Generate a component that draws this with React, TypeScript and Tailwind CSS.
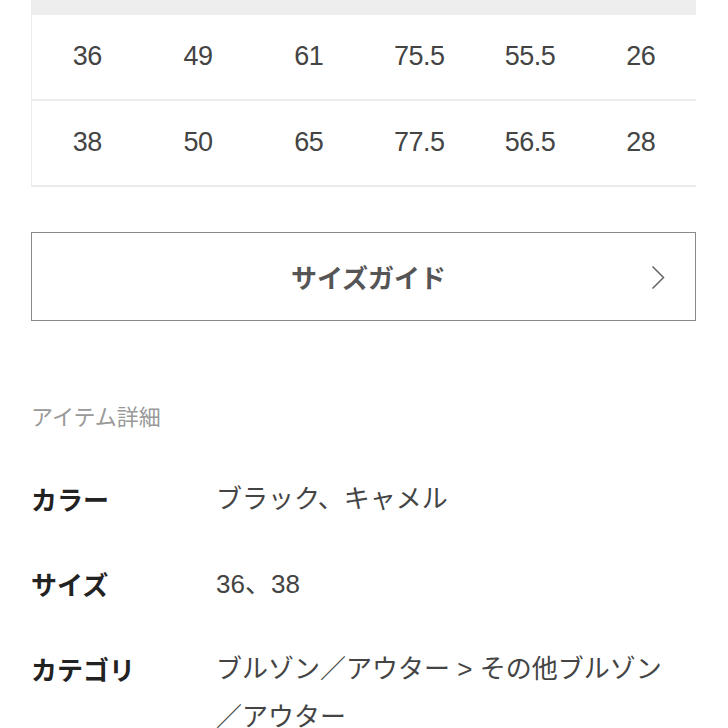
import type { ReactNode } from 'react';

const rows = [
  ['36', '49', '61', '75.5', '55.5', '26'],
  ['38', '50', '65', '77.5', '56.5', '28'],
];

const details: { label: string; value: ReactNode }[] = [
  { label: 'カラー', value: 'ブラック、キャメル' },
  { label: 'サイズ', value: '36、38' },
  {
    label: 'カテゴリ',
    value: (
      <>
        ブルゾン／アウター &gt; その他ブルゾン
        <br />
        ／アウター
      </>
    ),
  },
];

export default function App() {
  return (
    <div
      className="w-[728px] h-[728px] overflow-hidden bg-white text-[#333]"
      style={{ fontFamily: '"Liberation Sans", "Noto Sans CJK JP", sans-serif' }}
    >
      <div className="pl-[31px] pr-[32px]">
        {/* size table (scrolled, header cut off) */}
        <div className="border-l border-[#ececec]">
          <div className="h-[15px] bg-[#eeeeee]" />
          {rows.map((r, i) => (
            <div key={i} className="grid grid-cols-6 h-[86px] border-b-2 border-[#ebebeb] items-center">
              {r.map((v, j) => (
                <div key={j} className="text-center text-[27px] tracking-[-0.5px] text-[#444] pb-[1px]">
                  {v}
                </div>
              ))}
            </div>
          ))}
        </div>

        <div className="mt-[45px] h-[89px] border-[1.5px] border-[#8a8a8a] flex items-center justify-center relative">
          <span className="text-[26px] font-bold text-[#555] pl-[10px]" style={{ fontFamily: '"Noto Sans CJK JP", sans-serif' }}>
            サイズガイド
          </span>
          <svg className="absolute right-[30px] top-[32px]" width="14" height="25" viewBox="0 0 14 25" fill="none">
            <path d="M1.5 1.5 L12.5 12.5 L1.5 23.5" stroke="#666" strokeWidth="1.5" />
          </svg>
        </div>

        <div
          className="mt-[79px] text-[22px] leading-[30px] text-[#999]"
          style={{ fontFamily: '"Noto Sans CJK JP", sans-serif' }}
        >
          アイテム詳細
        </div>

        <div className="mt-[45px] flex flex-col gap-[37px]">
          {details.map((d) => (
            <div key={d.label} className="flex text-[26px] leading-[48px]">
              <div
                className="w-[185px] shrink-0 font-bold text-[#222]"
                style={{ fontFamily: '"Noto Sans CJK JP", sans-serif' }}
              >
                {d.label}
              </div>
              <div className="w-[472px] text-[#444]">{d.value}</div>
            </div>
          ))}
        </div>
      </div>
    </div>
  );
}
